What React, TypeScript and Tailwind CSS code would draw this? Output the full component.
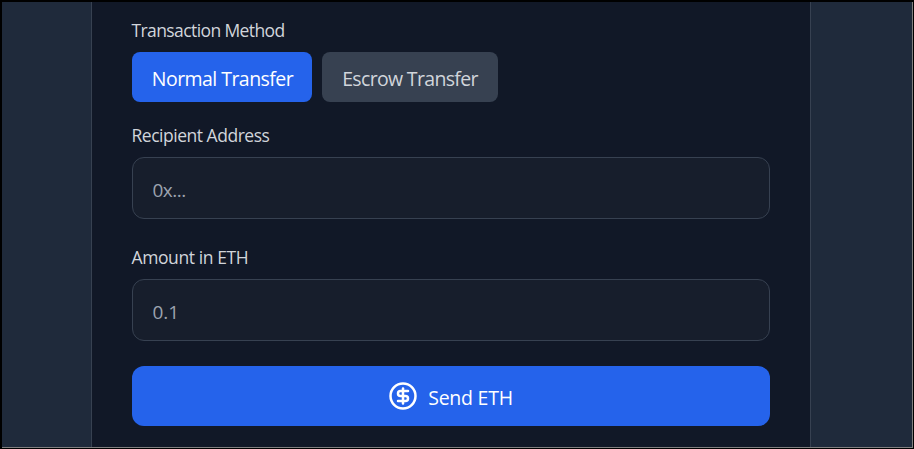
import { CircleDollarSign } from "lucide-react";

export default function App() {
  return (
    <div className="h-[449px] w-[914px] overflow-hidden border border-l-2 border-t-2 border-black bg-black font-['Open_Sans','Noto_Sans',sans-serif]">
      <div className="flex h-full justify-center border-b border-r border-[#808080] bg-[#1f2a3b] pr-[13px]">
        <main className="flex w-[720px] flex-col border-x border-[#374151] bg-[#111827] px-10 pt-4">
          <label className="block h-[26px] whitespace-nowrap text-[17.5px] leading-[25px] tracking-[-0.6px] text-[#d1d5db]">
            Transaction Method
          </label>
          <div className="mt-2 flex gap-2.5">
            <button className="h-[50px] w-[180px] whitespace-nowrap rounded-lg bg-[#2563eb] pl-0.5 pt-1 text-[19.5px] tracking-[-0.55px] text-white">
              Normal Transfer
            </button>
            <button className="h-[50px] w-44 whitespace-nowrap rounded-lg bg-[#374151] pl-px pt-1 text-[19.5px] tracking-[-0.67px] text-[#d1d5db]">
              Escrow Transfer
            </button>
          </div>
          <label className="mt-5 block h-[26px] whitespace-nowrap text-[17.5px] leading-[27px] tracking-[-0.48px] text-[#d1d5db]">
            Recipient Address
          </label>
          <input
            placeholder="0x..."
            className="mt-[9px] h-[62px] w-full shrink-0 rounded-xl border border-[#374151] bg-[#171e2c] px-5 pt-1 text-[19px] tracking-[-0.5px] text-white placeholder:text-[#9ca3af]"
          />
          <label className="mt-[25px] block h-[26px] whitespace-nowrap text-[17.5px] leading-[27px] tracking-[-0.4px] text-[#d1d5db]">
            Amount in ETH
          </label>
          <input
            placeholder="0.1"
            className="mt-[9px] h-[62px] w-full shrink-0 rounded-xl border border-[#374151] bg-[#171e2c] px-5 pt-1 text-[19px] text-white placeholder:text-[#9ca3af]"
          />
          <button className="mt-[25px] flex h-[60px] w-full shrink-0 items-center justify-center gap-2.5 rounded-xl bg-[#2563eb] text-[19.5px] tracking-[-0.25px] text-white">
            <CircleDollarSign size={30} strokeWidth={2} />
            <span className="whitespace-nowrap pt-1">Send ETH</span>
          </button>
        </main>
      </div>
    </div>
  );
}
